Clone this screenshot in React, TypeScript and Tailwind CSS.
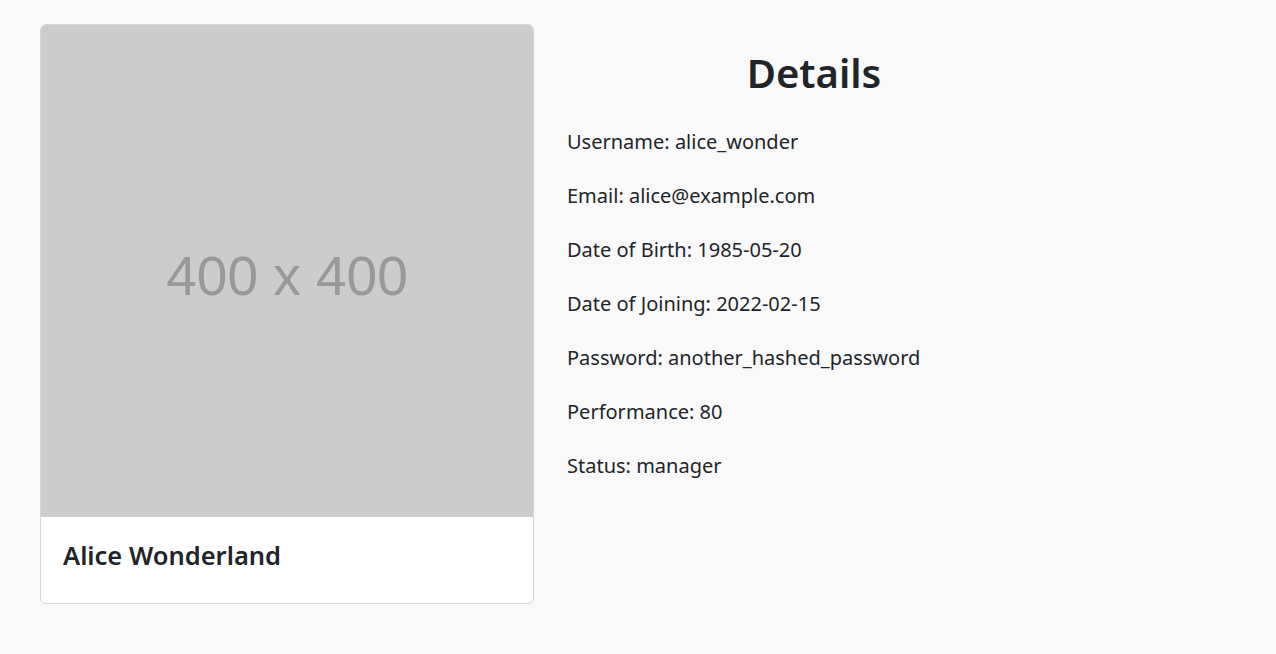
export default function App() {
  const details = [
    ['Username', 'alice_wonder'],
    ['Email', 'alice@example.com'],
    ['Date of Birth', '1985-05-20'],
    ['Date of Joining', '2022-02-15'],
    ['Password', 'another_hashed_password'],
    ['Performance', '80'],
    ['Status', 'manager'],
  ];

  return (
    <div
      className="min-h-[654px] bg-[#f9f9f9] text-[#212529]"
      style={{ fontFamily: '"Noto Sans", "Segoe UI", sans-serif' }}
    >
      <div className="flex gap-[33px] pl-[40px] pt-[24px]">
        <div className="w-[494px] shrink-0 overflow-hidden rounded-[6px] border border-[#d6d6d6] bg-white">
          <div className="flex h-[492px] items-center justify-center bg-[#cccccc] pt-[10px]">
            <span
              className="text-[55px] text-[#999999]"
              style={{ fontFamily: '"Liberation Sans", Arial, sans-serif' }}
            >
              400 x 400
            </span>
          </div>
          <div className="flex h-[86px] items-center px-[22px] pb-[8px]">
            <h5 className="text-[25.5px] font-semibold leading-none">Alice Wonderland</h5>
          </div>
        </div>
        <div className="w-[494px] shrink-0">
          <h1 className="mt-[23px] mb-[28px] text-center text-[40px] font-semibold leading-[52px]">Details</h1>
          <div className="flex flex-col gap-[24px]">
            {details.map(([label, value]) => (
              <p key={label} className="text-[20px] leading-[30px]">
                {label}: {value}
              </p>
            ))}
          </div>
        </div>
      </div>
    </div>
  );
}
